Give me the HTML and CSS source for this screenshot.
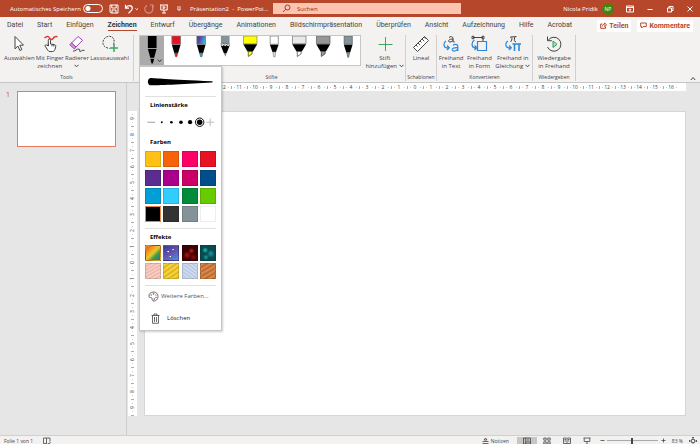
FILE: index.html
```html
<!DOCTYPE html>
<html lang="de">
<head>
<meta charset="utf-8">
<title>Präsentation2 - PowerPoint</title>
<link rel="stylesheet" href="styles.css">
</head>
<body>
<header class="titlebar">
  <div class="quick">
    <label class="autosave" for="autosave">Automatisches Speichern</label>
    <input class="switch" id="autosave" type="checkbox">
    <div class="quick-icons">
      <button class="icon-btn" aria-label="Speichern"><svg width="10" height="10" viewBox="0 0 10 10"><path d="M1 1h8v8H2.200L1 8zM2.800 1v3h4.400V1M3 9V6h4v3"/></svg></button>
      <button class="icon-btn" aria-label="Rückgängig"><svg width="15" height="10" viewBox="0 0 15 10"><path d="M1.500.800v3.400H5M1.700 4C3.500.500 8.500 1 8.300 4.500 8.200 6.500 6 7.500 4.500 9.300" stroke-width="1.200"/><path d="M11.500 4.500l1.200 1.200 1.200-1.200"/></svg></button>
      <button class="icon-btn faded" aria-label="Wiederholen"><svg width="10" height="10" viewBox="0 0 10 10"><path d="M5.800 1H9v3.200M3 1.500A4 4 0 1 0 8.500 3.500L9 1" stroke-width="1.200"/></svg></button>
      <button class="icon-btn" aria-label="Von Beginn an"><svg width="10" height="10" viewBox="0 0 10 10"><path d="M1 1h8M1.800 1v5h6.400V1M5 6v3M3 9h4M4.200 2.300v2.400l2-1.200z"/></svg></button>
      <button class="icon-btn last" aria-label="Anpassen"><svg width="6" height="6" viewBox="0 0 6 6"><path d="M1 1h4M1.300 3L3 4.600 4.700 3z" stroke-width=".8"/></svg></button>
    </div>
    <span class="doc-name">Präsentation2&nbsp; -&nbsp; PowerPoi...</span>
  </div>
  <div class="search">
    <svg width="9" height="9" viewBox="0 0 9 9"><circle cx="5.500" cy="3.500" r="2.500"/><path d="M3.700 5.300L1 8"/></svg>
    <input type="search" aria-label="Suchen" placeholder="Suchen">
  </div>
  <div class="account">
    <span>Nicola Pridik</span>
    <span class="avatar">NP</span>
    <button class="icon-btn win" aria-label="Menübandoptionen"><svg width="10" height="10" viewBox="0 0 10 10"><path d="M1.500 2h7v6h-7zM1.500 3.500h7M5 7.500V5M3.800 6L5 4.800 6.200 6"/></svg></button>
    <button class="icon-btn win" aria-label="Minimieren"><svg width="8" height="8" viewBox="0 0 8 8"><path d="M1.500 4.500h5"/></svg></button>
    <button class="icon-btn win" aria-label="Verkleinern"><svg width="8" height="8" viewBox="0 0 8 8"><path d="M1.500 3h4v4h-4zM3 3V1.500h4v4H5.500"/></svg></button>
    <button class="icon-btn win" aria-label="Schließen"><svg width="8" height="8" viewBox="0 0 8 8"><path d="M1.500 1.500l5 5M6.500 1.500l-5 5"/></svg></button>
  </div>
</header>

<nav class="tabs">
  <div class="tab-list">
    <a href="#">Datei</a><a href="#">Start</a><a href="#">Einfügen</a><a href="#" class="active">Zeichnen</a><a href="#">Entwurf</a><a href="#">Übergänge</a><a href="#">Animationen</a><a href="#">Bildschirmpräsentation</a><a href="#">Überprüfen</a><a href="#">Ansicht</a><a href="#">Aufzeichnung</a><a href="#">Hilfe</a><a href="#">Acrobat</a>
  </div>
  <div class="tab-actions">
    <button class="share"><svg width="7" height="7" viewBox="0 0 7 7"><path d="M2.500 2H.700v4.300h4.800V4.500M2.300 4.500C2.500 2.800 3.500 2.200 4.600 2.200V1l2 1.800-2 1.800V3.400"/></svg>Teilen</button>
    <button class="share"><svg width="7" height="7" viewBox="0 0 7 7"><path d="M.700 1h5.600v3.600H3L1.700 6V4.600h-1z"/></svg>Kommentare</button>
  </div>
</nav>

<section class="ribbon">
  <div class="group tools">
    <div class="items">
      <button class="tool"><svg width="18" height="18" viewBox="0 0 18 18"><path class="white" d="M5 1.500v12.300l2.900-2.700 2 4.400 1.900-.900-2-4.300 3.700-.200z"/></svg><span>Auswählen</span></button>
      <button class="tool"><svg width="18" height="18" viewBox="0 0 18 18"><path class="red" d="M3.500 3C6 .500 8 1.500 8.500 3s2.500 2 3.500.500 3-2.500 4.500-1.500"/><path class="white" d="M7.300 11V5.200c0-1.600 2.200-1.600 2.200 0V9l4 .700c1 .200 1.400 1 1.200 2l-.700 2.600c-.4 1.400-1.200 2.200-2.700 2.200H9c-1 0-1.700-.500-2.200-1.300l-2.600-4c-.6-1.100.8-2 1.600-1z"/><path d="M7.300 11V8.500M11 9.500v1.800M12.800 9.800v1.700"/></svg><span>Mit Finger<br>zeichnen</span></button>
      <button class="tool"><svg width="18" height="18" viewBox="0 0 18 18"><path class="violet" d="M3.500 8L10 1.500l4.500 3.800L8 12z"/><path class="violet-light" d="M3.500 8L8 12l-1.500 2L1.800 9.800z"/><path d="M5 16c2 .8 4-2.500 6-2s-.5 2.700 1.200 2.500 1.300-2 4.300-1"/></svg><span>Radierer</span><svg class="caret" width="5" height="4" viewBox="0 0 5 4"><path d="M.500.800l2 2 2-2"/></svg></button>
      <button class="tool"><svg width="18" height="18" viewBox="0 0 18 18"><path class="dash" d="M12.500 9.500C14 6 13 1.500 8.500 1.300 4 1.200 1.500 5 2 8.500c.5 3.500 4 4.500 6.500 5"/><path class="green" d="M13 9v8M9 13h8"/></svg><span>Lassoauswahl</span></button>
    </div>
    <h2>Tools</h2>
  </div>

  <div class="group pens">
    <div class="items">
      <div class="gallery">
        <button class="pen selected" aria-label="Stift: Schwarz"><svg viewBox="0 0 24 30"><path fill="#000" d="M7.500 0h9v12.500h-9z"/><path fill="#000" d="M7.500 13.500h9l-2.500 9h-4z"/><path fill="#000" d="M10 23.500h4l-1.300 5h-1.400z"/><path class="line" d="M17.800 24.500l1.900 1.900 1.900-1.900"/></svg></button>
        <button class="pen" aria-label="Stift: Rot"><svg viewBox="0 0 24 30"><path fill="#e81123" stroke="#777" stroke-width=".8" d="M7.500 0h9v8.500h-9z"/><path fill="#000" d="M7.500 9h9L14 17.500h-4z"/><path fill="#e81123" stroke="#755" stroke-width=".6" d="M10.300 17.500h3.400l-1 4h-1.400z"/></svg></button>
        <button class="pen" aria-label="Stift: Galaxie"><svg viewBox="0 0 24 30"><defs><linearGradient id="galaxyPen" x2="1" y2=".4"><stop stop-color="#343a8c"/><stop offset=".45" stop-color="#5b48a5"/><stop offset="1" stop-color="#39b4e0"/></linearGradient></defs><path fill="url(#galaxyPen)" stroke="#777" stroke-width=".8" d="M7.500 0h9v8.500h-9z"/><path fill="#000" d="M7.500 9h9L14 17.500h-4z"/><path fill="#39a9c8" stroke="#456" stroke-width=".6" d="M10.300 17.500h3.400l-1 4h-1.400z"/></svg></button>
        <button class="pen" aria-label="Bleistift: Grau"><svg viewBox="0 0 24 30"><path fill="#849398" d="M7.500 0h9v8.500h-9z"/><path fill="#000" d="M7.500 7.500l1.500 2 1.500-2 1.500 2 1.500-2 1.500 2 1.500-2v2.500l-3 7.500h-3l-3-7.500z"/><path fill="#fff" d="M7.500 8l1.500 1.500 1.500-1.500 1.500 1.500 1.500-1.500 1.500 1.500 1.500-1.500v1.200l-1.500 1.500-1.500-1.500-1.500 1.500-1.500-1.500-1.500 1.500-1.500-1.500z"/><path fill="#68777d" d="M10.600 17.500h2.800l-1.200 4z"/></svg></button>
        <button class="pen" aria-label="Textmarker: Gelb"><svg viewBox="0 0 24 30"><path fill="#ff0" stroke="#887" stroke-width=".8" d="M5 0h14v8H5z"/><path fill="#000" d="M4.800 8.500h14.400L14.800 16H9.200z"/><path fill="#ff0" stroke="#333" stroke-width=".7" d="M10 16h4v2.500l-4 2.700z"/></svg></button>
        <button class="pen" aria-label="Stift: Weiß"><svg viewBox="0 0 24 30"><path fill="#fff" stroke="#777" stroke-width=".8" d="M7.800 0h8.400v8.500H7.800z"/><path fill="#000" d="M7.500 9h9l-2.700 7.500h-3.600z"/><path fill="#ddd" stroke="#777" stroke-width=".6" d="M10.600 16.500h2.800l-.4 5h-1.600z"/></svg></button>
        <button class="pen" aria-label="Textmarker: Hellgrau"><svg viewBox="0 0 24 30"><path fill="#e8e8e8" stroke="#777" stroke-width=".8" d="M5 0h14v8H5z"/><path fill="#000" d="M4.800 8.500h14.400L14.800 16H9.200z"/><path fill="#fff" stroke="#333" stroke-width=".7" d="M10 16h4v2.500l-4 2.700z"/></svg></button>
        <button class="pen" aria-label="Textmarker: Grau"><svg viewBox="0 0 24 30"><path fill="#969696" stroke="#666" stroke-width=".8" d="M5 0h14v8H5z"/><path fill="#000" d="M4.800 8.500h14.400L14.800 16H9.200z"/><path fill="#999" stroke="#333" stroke-width=".7" d="M10 16h4v2.500l-4 2.700z"/></svg></button>
        <button class="pen" aria-label="Stift: Grau"><svg viewBox="0 0 24 30"><path fill="#849398" stroke="#566" stroke-width=".8" d="M7.800 0h8.400v8.500H7.800z"/><path fill="#000" d="M7.500 9h9L14 17h-4z"/><path fill="#849398" stroke="#455" stroke-width=".6" d="M10.500 17h3l-1 5h-1z"/></svg></button>

        <div class="menu">
          <svg class="preview" viewBox="0 0 68 10"><path d="M3.500 1C5 .900 20 2.500 66 4.300c1 .400 1 1.200 0 1.300C40 7 12 8.600 3.500 8.500 0 8 0 1.500 3.500 1z"/></svg>
          <hr>
          <h3>Linienstärke</h3>
          <div class="thickness">
            <svg viewBox="0 0 74 12"><path stroke="#999" d="M2.500 6.500h8"/><circle cx="17.500" cy="6.500" r="1"/><circle cx="27.500" cy="6.500" r="1.400"/><circle cx="37.500" cy="6.500" r="1.900"/><circle cx="47" cy="6.500" r="2.200"/><circle cx="57" cy="6.500" r="2.900"/><circle cx="57" cy="6.500" r="4.400" fill="none" stroke="#000"/><path stroke="#bbb" d="M64 6.500h8M68 2.500v8"/></svg>
          </div>
          <h3>Farben</h3>
          <div class="swatches colors">
            <button class="c-yellow" aria-label="Gelb"></button><button class="c-orange" aria-label="Orange"></button><button class="c-pink" aria-label="Pink"></button><button class="c-red" aria-label="Rot"></button>
            <button class="c-purple" aria-label="Lila"></button><button class="c-magenta" aria-label="Magenta"></button><button class="c-berry" aria-label="Beere"></button><button class="c-navy" aria-label="Dunkelblau"></button>
            <button class="c-blue" aria-label="Blau"></button><button class="c-sky" aria-label="Hellblau"></button><button class="c-green" aria-label="Grün"></button><button class="c-lime" aria-label="Hellgrün"></button>
            <button class="c-black" aria-label="Schwarz"></button><button class="c-dark" aria-label="Dunkelgrau"></button><button class="c-gray" aria-label="Grau"></button><button class="c-white" aria-label="Weiß"></button>
          </div>
          <hr>
          <h3>Effekte</h3>
          <div class="swatches effects">
            <button class="e-rainbow" aria-label="Regenbogen"></button><button class="e-galaxy" aria-label="Galaxie"></button><button class="e-lava" aria-label="Lava"></button><button class="e-ocean" aria-label="Ozean"></button>
            <button class="e-rose" aria-label="Roségold"></button><button class="e-gold" aria-label="Gold"></button><button class="e-silver" aria-label="Silber"></button><button class="e-bronze" aria-label="Bronze"></button>
          </div>
          <hr>
          <button class="menu-row more"><svg width="11" height="11" viewBox="0 0 11 11"><path d="M5.500 1C2.500 1 .700 3 1 5.500c.2 1.600 1.500.800 2.500 1.200S3.500 9 5 9.800c2.500 1 5-1.500 5-4.300S8 1 5.500 1z"/><circle cx="3.200" cy="4" r=".8" fill="#43a047" stroke="none"/><circle cx="5.500" cy="2.900" r=".8" fill="#e53935" stroke="none"/><circle cx="7.800" cy="4" r=".8" fill="#fb8c00" stroke="none"/><circle cx="8" cy="6.500" r=".8" fill="#1e88e5" stroke="none"/><circle cx="6.300" cy="8" r=".8" fill="#8e24aa" stroke="none"/></svg>Weitere Farben...</button>
          <button class="menu-row delete"><svg width="11" height="11" viewBox="0 0 11 11"><path d="M1.500 2.500h8M4 2.500V1h3v1.500M2.500 2.500v7.800h6V2.500M4.500 4v5M6.500 4v5"/></svg>Löschen</button>
        </div>
      </div>
      <button class="tool add"><svg width="18" height="18" viewBox="0 0 18 18"><path class="green thin" d="M9.500 2v14M2.500 9.500h14"/></svg><span>Stift</span><span class="with-caret">hinzufügen <svg class="caret" width="5" height="4" viewBox="0 0 5 4"><path d="M.500.800l2 2 2-2"/></svg></span></button>
    </div>
    <h2>Stifte</h2>
  </div>

  <div class="group stencils">
    <div class="items">
      <button class="tool"><svg width="18" height="18" viewBox="0 0 18 18"><path class="white" d="M1.500 12.500l11-11 4 4-11 11z"/><path d="M4 10l1.500 1.500M6 8l2.200 2.200M8 6l1.500 1.500M10 4l2.200 2.200M12 2.200l1.500 1.500"/></svg><span>Lineal</span></button>
    </div>
    <h2>Schablonen</h2>
  </div>

  <div class="group convert">
    <div class="items">
      <button class="tool"><svg width="18" height="18" viewBox="0 0 18 18"><path d="M7 2.500c1.500-1.500 4-1 4 .800V7M11 4c-5-.3-5.500 3-3 3 1.500 0 3-1 3-2.500M11 6.500c.5.800 1.200.6 1.800.200"/><path class="blue" d="M11 10.300c1.500-1.500 4.800-1.200 4.800 1V16M15.800 12.700c-4.500-.2-6 .800-5.500 2.300.7 1.800 4.500 1.200 5.500-1M4 6C1.500 7.500 1 12 4.500 12.800H7M5 10.500l2.300 2.300L5 15"/></svg><span>Freihand<br>in Text</span></button>
      <button class="tool"><svg width="18" height="18" viewBox="0 0 18 18"><path d="M3 2.500h10M2 1.300h2v2.400H2zM12 1.300h2v2.400h-2zM13 4v2"/><path class="blue" d="M7.500 6.500h9v9h-9zM4.500 5C1.500 6.500 1 12 4.500 12.800H7M4.500 10.500l2.300 2.300L4.500 15"/></svg><span>Freihand<br>in Form</span></button>
      <button class="tool"><svg width="18" height="18" viewBox="0 0 18 18"><path d="M6 2.700C7 1 9 2.300 12.500 1.500M8 2.300C8 4.500 7.500 6 6.500 7M10.800 2c-.8 3-.8 5 1.200 4.700"/><path class="blue wide" d="M8.500 9h8.500M10.500 9v7M15 9v7"/><path class="blue" d="M4 6C1 7.500 1 12 4.500 12.800H7M5 10.500l2.300 2.300L5 15"/></svg><span>Freihand in</span><span class="with-caret">Gleichung <svg class="caret" width="5" height="4" viewBox="0 0 5 4"><path d="M.500.800l2 2 2-2"/></svg></span></button>
    </div>
    <h2>Konvertieren</h2>
  </div>

  <div class="group replay">
    <div class="items">
      <button class="tool"><svg width="18" height="18" viewBox="0 0 18 18"><path d="M3 5.500A7 7 0 1 1 2.500 12M2.500 1.500v4.200h4.300"/><path class="play" d="M8 6v6.500l4-3.200z"/></svg><span>Wiedergabe<br>in Freihand</span></button>
    </div>
    <h2>Wiedergeben</h2>
  </div>
  <button class="collapse" aria-label="Menüband reduzieren"><svg width="6" height="5" viewBox="0 0 6 5"><path d="M.800 4L3 1.500 5.200 4"/></svg></button>
</section>

<main class="workspace">
  <aside class="slides">
    <span class="slide-no">1</span>
    <button class="thumb" aria-label="Folie 1"></button>
  </aside>
  <div class="editor">
    <div class="ruler-h"><span>16</span><span>15</span><span>14</span><span>13</span><span>12</span><span>11</span><span>10</span><span>9</span><span>8</span><span>7</span><span>6</span><span>5</span><span>4</span><span>3</span><span>2</span><span>1</span><span>0</span><span>1</span><span>2</span><span>3</span><span>4</span><span>5</span><span>6</span><span>7</span><span>8</span><span>9</span><span>10</span><span>11</span><span>12</span><span>13</span><span>14</span><span>15</span><span>16</span></div>
    <div class="ruler-v"><span>9</span><span>8</span><span>7</span><span>6</span><span>5</span><span>4</span><span>3</span><span>2</span><span>1</span><span>0</span><span>1</span><span>2</span><span>3</span><span>4</span><span>5</span><span>6</span><span>7</span><span>8</span><span>9</span></div>
    <div class="slide"></div>
  </div>
</main>

<footer class="status">
  <span>Folie 1 von 1</span>
  <button class="icon-btn spell" aria-label="Rechtschreibung"><svg width="8" height="8" viewBox="0 0 8 8"><path d="M.500 1h3v5.500h-3zM3.500 1h3.500v3.500M3.500 6.500l1 .8M5 6l1 1.300L7.500 5"/></svg></button>
  <div class="status-right">
    <button class="icon-btn notes"><svg width="7" height="7" viewBox="0 0 7 7"><path d="M.500 6.500h6M.500 4.500h6M2 3l1.500-2L5 3z"/></svg>Notizen</button>
    <button class="icon-btn view on" aria-label="Normal"><svg width="8" height="8" viewBox="0 0 8 8"><path d="M.500 1h7v6h-7zM2.700 1v6M2.700 5h4.800M4 3h2"/></svg></button>
    <button class="icon-btn view" aria-label="Foliensortierung"><svg width="8" height="8" viewBox="0 0 8 8"><path d="M.800 1h2.400v2.200H.800zM4.800 1h2.400v2.200H4.800zM.800 4.800h2.400V7H.800zM4.800 4.800h2.400V7H4.800z"/></svg></button>
    <button class="icon-btn view" aria-label="Leseansicht"><svg width="8" height="8" viewBox="0 0 8 8"><path d="M.500 1h3L4 1.500 4.500 1h3v5.500h-3L4 7l-.500-.500h-3zM4 1.500V7M1.500 2.500h1.500M1.500 4h1.500M5 2.500h1.500M5 4h1.500"/></svg></button>
    <button class="icon-btn view" aria-label="Bildschirmpräsentation"><svg width="8" height="8" viewBox="0 0 8 8"><path d="M.500 1h7M1.200 1v3.500h5.600V1M4 4.500v2.700M2.500 7.300h3"/></svg></button>
    <button class="icon-btn zoom-btn" aria-label="Verkleinern"><svg width="5" height="5" viewBox="0 0 5 5"><path d="M.500 2.500h4"/></svg></button>
    <input class="zoom" type="range" aria-label="Zoom" min="10" max="400" value="200">
    <button class="icon-btn zoom-btn" aria-label="Vergrößern"><svg width="5" height="5" viewBox="0 0 5 5"><path d="M.500 2.500h4M2.500.500v4"/></svg></button>
    <span class="percent">83 %</span>
    <button class="icon-btn" aria-label="Einpassen"><svg width="8" height="8" viewBox="0 0 8 8"><path d="M2.500 2.500h3v3h-3zM4 0v2M4 6v2M0 4h2M6 4h2M3 1l1-1 1 1M3 7l1 1 1-1M1 3L0 4l1 1M7 3l1 1-1 1"/></svg></button>
  </div>
</footer>
</body>
</html>
```
FILE: styles.css
```css
* { box-sizing: border-box; }

body {
  margin: 0;
  height: 100vh;
  display: flex;
  flex-direction: column;
  background: #e6e6e6;
  color: #444;
  font: 6px/8px "Open Sans", "Noto Sans", sans-serif;
  overflow: hidden;
}

button {
  margin: 0;
  padding: 0;
  border: 0;
  background: none;
  color: inherit;
  font: inherit;
}

svg { display: block; flex: none; fill: none; stroke: currentColor; stroke-width: 1; }
a { color: inherit; text-decoration: none; }
h2, h3 { margin: 0; }

/* Title bar */
.titlebar {
  display: flex;
  align-items: center;
  height: 17px;
  background: #b7472a;
  color: #fff;
}
.quick {
  flex: 0 0 39%;
  display: flex;
  align-items: center;
  padding-left: 10px;
  white-space: nowrap;
}
.switch {
  appearance: none;
  width: 20px;
  height: 9px;
  margin: 0 0 0 2px;
  border: 1px solid #fff;
  border-radius: 5px;
  background: radial-gradient(circle at 4px 50%, #fff 2px, transparent 3px);
}
.quick-icons { display: flex; align-items: center; gap: 5px; margin-left: 6px; }
.icon-btn { display: flex; align-items: center; }
.faded { opacity: .4; }
.last { margin-left: 2px; }
.doc-name { margin-left: 8px; }
.search {
  flex: 0 1 188px;
  display: flex;
  align-items: center;
  gap: 6px;
  height: 11px;
  padding-left: 9px;
  background: #fdc5b0;
  color: #a4373a;
}
.search input {
  flex: 1;
  min-width: 0;
  padding: 0;
  border: 0;
  background: none;
  color: inherit;
  font: inherit;
}
.search input::placeholder { color: #8f2a1c; }
.account {
  flex: 1;
  display: flex;
  align-items: center;
  justify-content: flex-end;
  gap: 4px;
  padding-right: 2px;
}
.avatar {
  width: 12px;
  height: 12px;
  margin-right: 4px;
  border-radius: 50%;
  background: #498205;
  font-size: 5px;
  line-height: 12px;
  text-align: center;
}
.win { width: 16px; justify-content: center; }

/* Tabs */
.tabs {
  display: flex;
  justify-content: space-between;
  align-items: center;
  height: 17px;
  padding: 0 7px;
  background: #f3f2f1;
  font: 7px/8px Roboto, "Open Sans", sans-serif;
}
.tab-list { display: flex; gap: 14px; }
.tab-list a { padding: 1px 0; border-bottom: 1px solid transparent; }
.tab-list .active { font-weight: 700; color: #333; border-color: #b7472a; }
.tab-actions { display: flex; gap: 6px; }
.share {
  display: flex;
  align-items: center;
  gap: 2px;
  height: 12px;
  padding: 0 3px;
  background: #fff;
  color: #b7472a;
  font-weight: 700;
}

/* Ribbon */
.ribbon {
  display: flex;
  height: 49px;
  background: #f3f2f1;
  border-bottom: 1px solid #c8c6c4;
}
.group {
  display: flex;
  flex-direction: column;
  justify-content: space-between;
  margin: 1px 0;
  border-right: 1px solid #d2d0ce;
}
.group h2 { font-size: 5px; font-weight: 400; text-align: center; }
.items { display: flex; justify-content: space-around; }
.tools { flex: 0 0 134px; padding: 0 4px; }
.tools .items { justify-content: space-between; }
.pens { flex: 0 0 272px; padding: 0 1px 0 5px; }
.pens .items { justify-content: space-between; }
.stencils { flex: 0 0 31px; }
.convert { flex: 0 0 96px; }
.replay { flex: 0 0 43px; }
.tool {
  display: flex;
  flex-direction: column;
  align-items: center;
  white-space: nowrap;
  text-align: center;
}
.tool > svg:first-child { margin-bottom: 1px; }
.caret { margin: 2px 0; }
.with-caret { display: flex; align-items: center; gap: 2px; }
.white { fill: #fff; }
.red { stroke: #e03c32; stroke-width: 1.5; }
.violet { fill: #fff; stroke: #a33fb5; }
.violet-light { fill: #d59be0; stroke: #a33fb5; }
.dash { stroke-dasharray: 2 1; }
.green { stroke: #3da660; stroke-width: 1.5; }
.thin { stroke-width: 1; }
.blue { stroke: #2b88d8; stroke-width: 1.2; }
.wide { stroke-width: 1.6; }
.play { fill: #b5e0c0; stroke: #2f9e55; }
.collapse { align-self: flex-end; margin: 0 4px 1px auto; }

.gallery {
  position: relative;
  flex: 0 0 222px;
  display: flex;
  height: 31px;
  border: 1px solid #c8c6c4;
  background: #fff;
}
.pen { flex: 1; }
.pen svg { width: 100%; height: 29px; stroke: none; }
.pen.selected { background: #ababab; }
.pen .line { stroke: #222; }

/* Pen options */
.menu {
  position: absolute;
  z-index: 2;
  top: 30px;
  left: -1px;
  width: 83px;
  padding: 10px 5px 0;
  border: 1px solid #c8c6c4;
  background: #fff;
  color: #222;
  box-shadow: 1px 1px 2px #0003;
}
.menu hr { height: 1px; margin: 0; border: 0; background: #e1dfdd; }
.menu h3 { padding-left: 5px; font-size: 6px; color: #000; }
.preview { width: 100%; margin-bottom: 9px; padding: 0 2px; fill: #000; stroke: none; }
.menu hr + h3 { margin-top: 4px; }
.thickness { margin: 7px 0 11px; }
.thickness svg { width: 100%; fill: #000; stroke: none; }
.swatches {
  display: grid;
  grid-template-columns: repeat(4, 16px);
  justify-content: space-between;
  align-content: space-between;
}
.swatches button { height: 16px; border: 1px solid #0002; }
.colors { height: 71px; margin: 5px 0 6px; }
.effects { height: 34px; margin: 4px 0 6px; }
.c-yellow { background: #ffc114; }
.c-orange { background: #f6630c; }
.c-pink { background: #ff0066; }
.c-red { background: #e71224; }
.c-purple { background: #5b2d90; }
.c-magenta { background: #ab008b; }
.c-berry { background: #cc0066; }
.c-navy { background: #004f8b; }
.c-blue { background: #00a0d7; }
.c-sky { background: #33ccff; }
.c-green { background: #008c3a; }
.c-lime { background: #66cc00; }
.swatches .c-black { background: #000; border: 1px solid #e8843c; }
.c-dark { background: #333; }
.c-gray { background: #849398; }
.swatches .c-white { background: #fff; border-color: #eee; }
.e-rainbow { background: linear-gradient(135deg, #e07a1c 15%, #f2a71c 35%, #e8c82c 50%, #3f9a4a 70%, #2a6fa8); }
.e-galaxy {
  background:
    radial-gradient(circle at 30% 40%, #fff 0 0.5px, transparent 1px),
    radial-gradient(circle at 65% 25%, #cdf 0 0.5px, transparent 1px),
    radial-gradient(circle at 45% 75%, #fff 0 0.5px, transparent 1px),
    linear-gradient(150deg, #2f3f90, #6a4fae 50%, #3c9ad0);
}
.e-lava {
  background:
    radial-gradient(circle at 60% 35%, #b01515 0 1px, transparent 3px),
    radial-gradient(circle at 30% 65%, #9a0f12 0 1px, transparent 4px),
    radial-gradient(circle at 75% 80%, #8a0c10, transparent 4px),
    #3a0305;
}
.e-ocean {
  background:
    radial-gradient(circle at 30% 30%, #17a3a4 0 1px, transparent 3px),
    radial-gradient(circle at 70% 55%, #148a90 0 1px, transparent 4px),
    radial-gradient(circle at 35% 80%, #1fa0a0, transparent 3px),
    #074a50;
}
.e-rose { background: repeating-linear-gradient(150deg, #f6cfc4 0 1px, #eeb3a7 2px, #f3c0b4 3px); }
.e-gold { background: repeating-linear-gradient(145deg, #f4d63c 0 1px, #dcae22 3px, #edc52c 4px); }
.e-silver { background: repeating-linear-gradient(35deg, #cdd9ef 0 1px, #b2c1e0 2px, #d4def2 3px); }
.e-bronze { background: repeating-linear-gradient(150deg, #d98a4a 0 1px, #b5622a 3px, #d08a4c 4px); }
.menu-row {
  display: flex;
  align-items: center;
  gap: 6px;
  width: 100%;
  height: 24px;
  padding-left: 5px;
}
.menu-row svg { stroke-width: .8; stroke: #444; }
.menu-row.more { gap: 2px; height: 20px; padding-left: 3px; color: #555; }

/* Workspace */
.workspace { flex: 1; display: flex; min-height: 0; }
.slides {
  flex: 0 0 127px;
  display: flex;
  align-items: flex-start;
  gap: 6px;
  padding: 8px 10px 0 6px;
  border-right: 1px solid #d0cecc;
}
.slide-no { width: 5px; color: #d24726; font-size: 7px; }
.thumb { flex: 1; aspect-ratio: 16 / 9; border: 1px solid #e8795c; background: #fff; }
.editor {
  flex: 1;
  display: grid;
  grid-template: 8px minmax(0, 1fr) / 9px minmax(0, 1fr);
  gap: 20px 7px;
  padding: 0 14px 19px 1px;
}
.ruler-h, .ruler-v {
  display: flex;
  background: #fff;
  font-size: 5px;
  text-align: center;
}
.ruler-h { grid-column: 2; padding: 0 7px; }
.ruler-h span {
  flex: 1 0 0;
  min-width: 0;
  background:
    linear-gradient(#aaa, #aaa) 0 50% / 1px 3px no-repeat,
    linear-gradient(#ccc, #ccc) 3px 50% / 1px 1px no-repeat,
    linear-gradient(#ccc, #ccc) 13px 50% / 1px 1px no-repeat;
}
.ruler-v { grid-column: 1; flex-direction: column; }
.ruler-v span {
  flex: 1 0 0;
  min-height: 0;
  writing-mode: vertical-rl;
  transform: rotate(180deg);
  background:
    linear-gradient(#aaa, #aaa) 50% 0 / 3px 1px no-repeat,
    linear-gradient(#ccc, #ccc) 50% 4px / 1px 1px no-repeat,
    linear-gradient(#ccc, #ccc) 50% 12px / 1px 1px no-repeat;
}
.slide { border: 1px solid #d8d6d4; background: #fff; }

/* Status bar */
.status {
  display: flex;
  align-items: center;
  height: 9px;
  padding: 1px 3px 0 4px;
  background: #f3f2f1;
  border-top: 1px solid #d2d0ce;
  font-size: 5px;
}
.status svg { stroke-width: .8; }
.spell { margin-left: 10px; }
.status-right { display: flex; align-items: center; margin-left: auto; }
.notes { gap: 2px; margin-right: 8px; }
.view { width: 20px; height: 8px; justify-content: center; }
.on { background: #c8c6c4; }
.zoom-btn { margin-left: 3px; }
.zoom {
  appearance: none;
  width: 51px;
  height: 7px;
  margin: 0 0 0 2px;
  background: linear-gradient(#aaa, #aaa) 0 50% / 100% 1px no-repeat;
}
.zoom::-webkit-slider-thumb { appearance: none; width: 2px; height: 6px; background: #444; }
.percent { margin: 0 6px 0 6px; }
```
